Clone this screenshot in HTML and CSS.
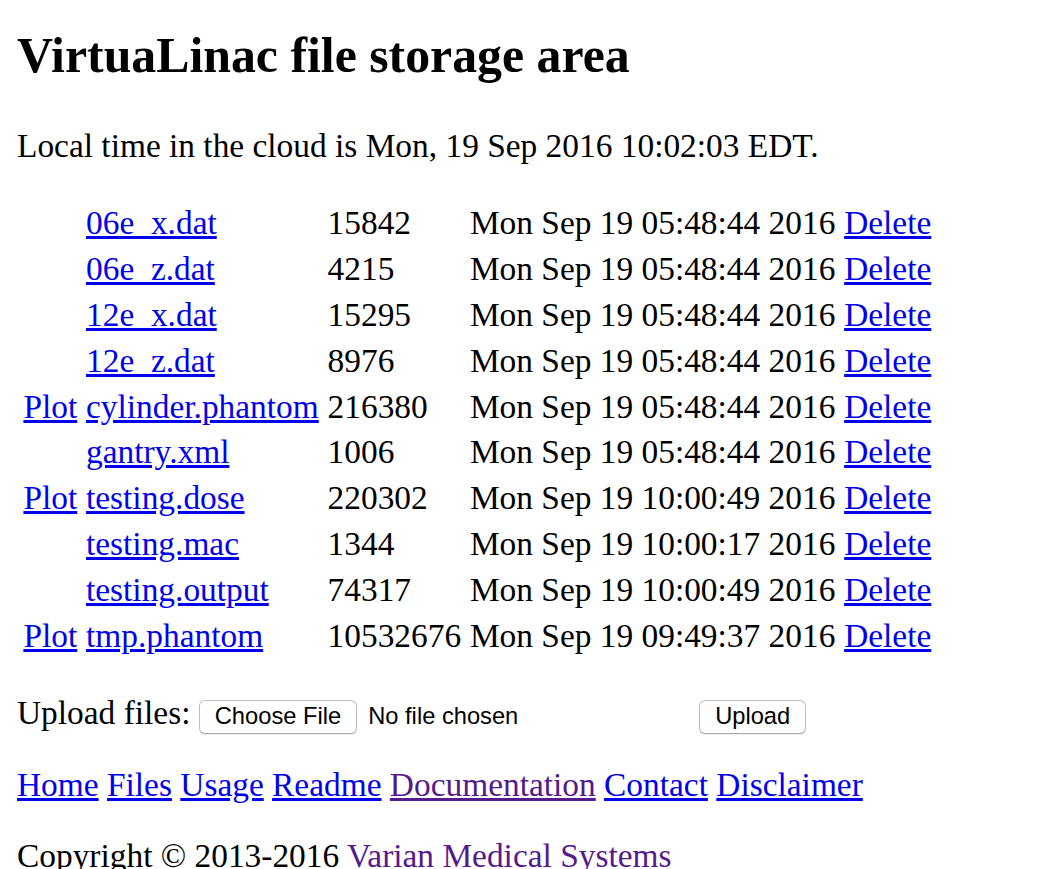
FILE: index.html
```html
<!DOCTYPE html>
<html lang="en">
<head>
<meta charset="utf-8">
<title>VirtuaLinac file storage area</title>
<link rel="stylesheet" href="styles.css">
</head>
<body>
<h2 class="title">VirtuaLinac file storage area</h2>
<p class="para">Local time in the cloud is Mon, 19 Sep 2016 10:02:03 EDT.</p>
<table class="files">
  <tr><td></td><td><a href="#">06e_x.dat</a></td><td>15842</td><td>Mon Sep 19 05:48:44 2016</td><td><a href="#">Delete</a></td></tr>
  <tr><td></td><td><a href="#">06e_z.dat</a></td><td>4215</td><td>Mon Sep 19 05:48:44 2016</td><td><a href="#">Delete</a></td></tr>
  <tr><td></td><td><a href="#">12e_x.dat</a></td><td>15295</td><td>Mon Sep 19 05:48:44 2016</td><td><a href="#">Delete</a></td></tr>
  <tr><td></td><td><a href="#">12e_z.dat</a></td><td>8976</td><td>Mon Sep 19 05:48:44 2016</td><td><a href="#">Delete</a></td></tr>
  <tr><td><a href="#">Plot</a></td><td><a href="#">cylinder.phantom</a></td><td>216380</td><td>Mon Sep 19 05:48:44 2016</td><td><a href="#">Delete</a></td></tr>
  <tr><td></td><td><a href="#">gantry.xml</a></td><td>1006</td><td>Mon Sep 19 05:48:44 2016</td><td><a href="#">Delete</a></td></tr>
  <tr><td><a href="#">Plot</a></td><td><a href="#">testing.dose</a></td><td>220302</td><td>Mon Sep 19 10:00:49 2016</td><td><a href="#">Delete</a></td></tr>
  <tr><td></td><td><a href="#">testing.mac</a></td><td>1344</td><td>Mon Sep 19 10:00:17 2016</td><td><a href="#">Delete</a></td></tr>
  <tr><td></td><td><a href="#">testing.output</a></td><td>74317</td><td>Mon Sep 19 10:00:49 2016</td><td><a href="#">Delete</a></td></tr>
  <tr><td><a href="#">Plot</a></td><td><a href="#">tmp.phantom</a></td><td>10532676</td><td>Mon Sep 19 09:49:37 2016</td><td><a href="#">Delete</a></td></tr>
</table>
<form class="para upload">Upload files: <span class="file-widget"><span class="btn">Choose File</span><span class="file-status">No file chosen</span></span> <span class="btn">Upload</span></form>
<p class="para nav"><a href="#">Home</a> <a href="#">Files</a> <a href="#">Usage</a> <a href="#">Readme</a> <a href="#" class="visited">Documentation</a> <a href="#">Contact</a> <a href="#">Disclaimer</a></p>
<p class="para">Copyright © 2013-2016 <a href="#" class="visited">Varian Medical Systems</a></p>
</body>
</html>
```

FILE: styles.css
```css
html {
  background: #ffffff;
}

body {
  margin: 0 17px;
  font-family: "Liberation Serif", "Times New Roman", serif;
  font-size: 33.4px;
  line-height: 37.6px;
  color: #000000;
}

a {
  color: #0000ee;
  text-decoration: underline;
}

a.visited {
  color: #551a8b;
}

.title {
  font-size: 49.8px;
  line-height: 57px;
  font-weight: bold;
  margin: 27px 0 43px;
}

.para {
  margin: 33.3px 0;
}

.files {
  border-collapse: separate;
  border-spacing: 4px;
  margin: 0;
}

.files td {
  padding: 2px 2.4px;
  line-height: 37.9px;
  text-align: left;
  vertical-align: baseline;
  white-space: nowrap;
}

.upload {
  display: block;
  margin-bottom: 30px;
}

.nav {
  margin-top: 30px;
}

.file-widget {
  display: inline-block;
  width: 492px;
  white-space: nowrap;
}

.btn {
  display: inline-block;
  font-family: "Liberation Sans", Arial, sans-serif;
  font-size: 23.7px;
  line-height: 27px;
  color: #000000;
  background: #ffffff;
  border: 1px solid #bdbdbd;
  border-bottom-color: #a9a9a9;
  border-radius: 6px;
  padding: 2px 15px 3px;
  box-shadow: 0 1px 1px rgba(0, 0, 0, 0.08);
  vertical-align: baseline;
}

.file-status {
  font-family: "Liberation Sans", Arial, sans-serif;
  font-size: 23.7px;
  margin-left: 11px;
}
```
